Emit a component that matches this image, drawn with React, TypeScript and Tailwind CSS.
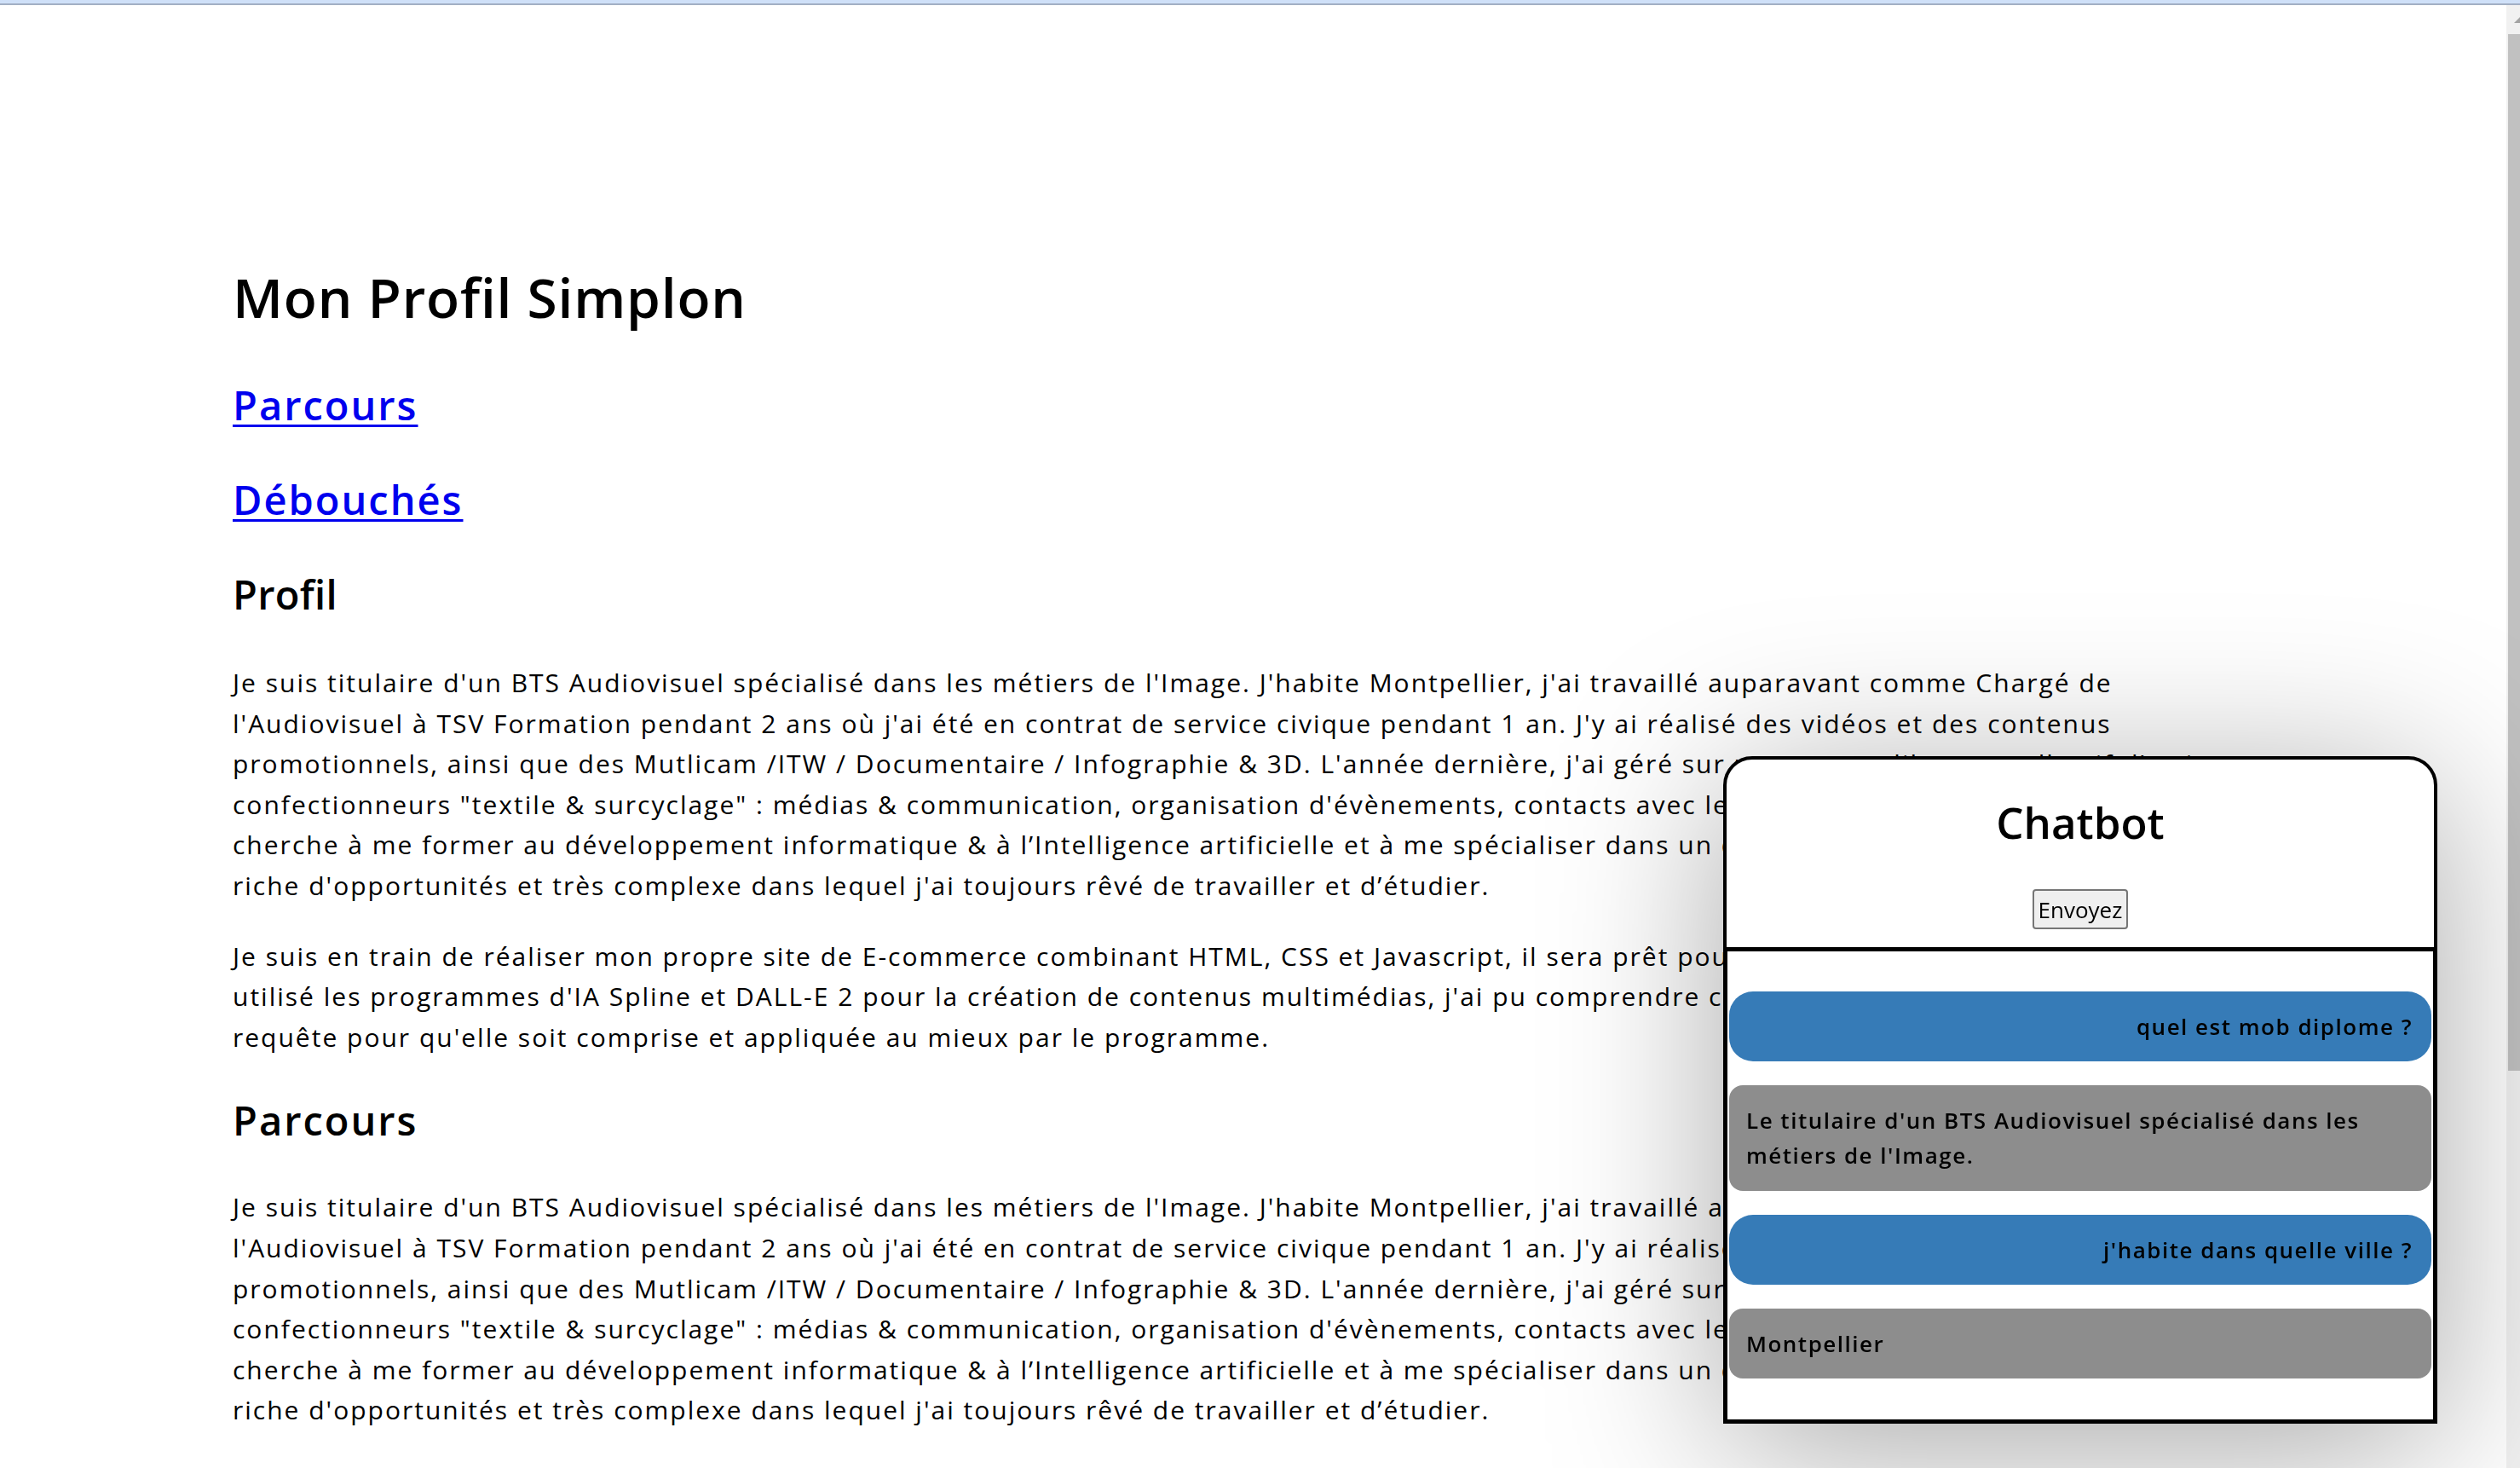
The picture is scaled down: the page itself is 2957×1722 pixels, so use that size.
import React from "react";

const p1 = [
  "Je suis titulaire d'un BTS Audiovisuel spécialisé dans les métiers de l'Image. J'habite Montpellier, j'ai travaillé auparavant comme Chargé de",
  "l'Audiovisuel à TSV Formation pendant 2 ans où j'ai été en contrat de service civique pendant 1 an. J'y ai réalisé des vidéos et des contenus",
  "promotionnels, ainsi que des Mutlicam /ITW / Documentaire / Infographie & 3D. L'année dernière, j'ai géré sur mon temps libre un collectif d'artistes et",
  "confectionneurs \"textile & surcyclage\" : médias & communication, organisation d'évènements, contacts avec les partenaires. Aujourd'hui, je",
  "cherche à me former au développement informatique & à l’Intelligence artificielle et à me spécialiser dans un domaine passionnant,",
  "riche d'opportunités et très complexe dans lequel j'ai toujours rêvé de travailler et d’étudier.",
];

const p2 = [
  "Je suis en train de réaliser mon propre site de E-commerce combinant HTML, CSS et Javascript, il sera prêt pour la fin de l'année. Ayant",
  "utilisé les programmes d'IA Spline et DALL-E 2 pour la création de contenus multimédias, j'ai pu comprendre comment formuler une",
  "requête pour qu'elle soit comprise et appliquée au mieux par le programme.",
];

function Para({ lines, className }: { lines: string[]; className: string }) {
  return (
    <p className={"text-[30px] leading-[47.6px] tracking-[2px] font-medium text-black " + className}>
      {lines.map((l, i) => (
        <span key={i} className="block whitespace-nowrap">
          {l}
        </span>
      ))}
    </p>
  );
}

function Chatbot() {
  return (
    <div className="fixed left-[2022px] top-[887px] w-[838px] h-[783px] flex flex-col rounded-[34px] border-4 border-black bg-white shadow-[0_30px_200px_rgba(0,0,0,0.35)]">
      <div className="flex flex-col items-center h-[220px]">
        <h2 className="mt-[43px] text-[51px] leading-[60px] font-semibold text-black">Chatbot</h2>
        <button className="mt-[49px] w-[112px] h-[47px] flex items-center justify-center rounded-[4px] border-2 border-[#767676] bg-[#efefef] text-[26px] leading-none text-black">
          Envoyez
        </button>
      </div>
      <div className="-mx-[4px] -mb-[4px] flex-1 border-[5px] border-black bg-white px-[2px] pt-[47px] pb-[47px] flex flex-col gap-[28px]">
        <div className="h-[82px] rounded-[28px] bg-[#367bb7] px-[22px] flex items-center justify-end text-[26px] tracking-[1.5px] font-semibold text-black">
          quel est mob diplome ?
        </div>
        <div className="h-[124px] rounded-[16px] bg-[#8d8d8d] px-[20px] flex items-center text-[26px] tracking-[1.5px] leading-[41px] font-semibold text-black">
          <span>
            Le titulaire d'un BTS Audiovisuel spécialisé dans les
            <br />
            métiers de l'Image.
          </span>
        </div>
        <div className="h-[82px] rounded-[28px] bg-[#367bb7] px-[22px] flex items-center justify-end text-[26px] tracking-[1.5px] font-semibold text-black">
          j'habite dans quelle ville ?
        </div>
        <div className="h-[82px] rounded-[16px] bg-[#8d8d8d] px-[20px] flex items-center text-[26px] tracking-[1.5px] font-semibold text-black">
          Montpellier
        </div>
      </div>
    </div>
  );
}

export default function App() {
  return (
    <div className="relative flex h-[1722px] w-full flex-col overflow-hidden bg-white font-['Open_Sans',sans-serif]">
      <div className="h-[4px] w-full bg-[#cfe0f8]" />
      <div className="h-[2px] w-full bg-[#a2afc4]" />
      <div className="flex flex-1">
        <main className="flex-1 pl-[273px]">
          <h1 className="mt-[303px] text-[64px] leading-[80px] tracking-[0.8px] font-semibold text-black">Mon Profil Simplon</h1>
          <h2 className="mt-[56px] text-[47px] leading-[60px] tracking-[2px] font-semibold">
            <a href="#parcours" className="text-[#0000ee] underline decoration-[3px] underline-offset-[5px]">
              Parcours
            </a>
          </h2>
          <h2 className="mt-[51px] text-[47px] leading-[60px] tracking-[2px] font-semibold">
            <a href="#debouches" className="text-[#0000ee] underline decoration-[3px] underline-offset-[5px]">
              Débouchés
            </a>
          </h2>
          <h3 className="mt-[51px] text-[47px] leading-[60px] tracking-[0.3px] font-semibold text-black">Profil</h3>
          <Para lines={p1} className="mt-[50px]" />
          <Para lines={p2} className="mt-[35px]" />
          <h2 className="mt-[44px] text-[47px] leading-[60px] tracking-[2px] font-semibold text-black">Parcours</h2>
          <Para lines={p1} className="mt-[48px]" />
        </main>
        <div className="flex w-[16px] flex-col bg-[#f1f1f1]">
          <div className="h-[34px] relative">
            <svg width="16" height="34" viewBox="0 0 16 34" className="absolute left-0 top-0">
              <polygon points="9,21 16,14 16,21" fill="#a3a3a3" />
            </svg>
          </div>
          <div className="ml-[2px] h-[1216px] bg-[#c1c1c1]" />
        </div>
      </div>
      <Chatbot />
    </div>
  );
}
